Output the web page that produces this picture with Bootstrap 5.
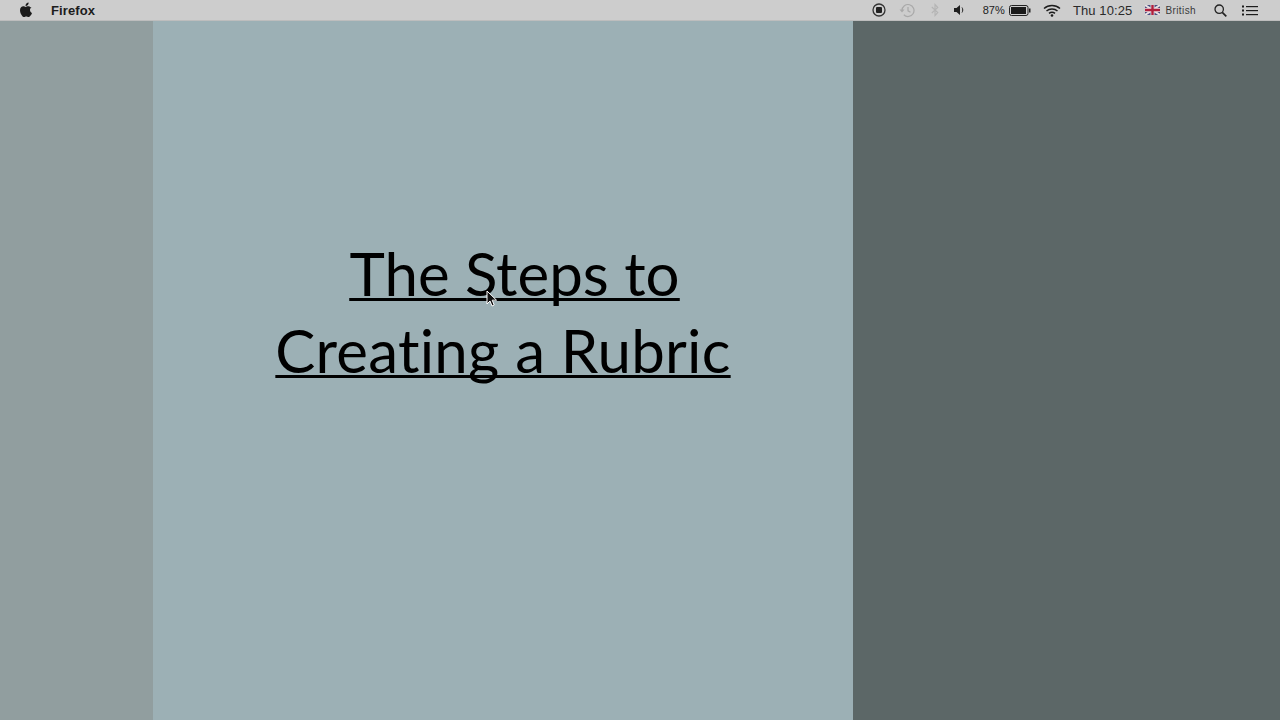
<!DOCTYPE html>
<html lang="en">
<head>
    <meta charset="UTF-8">
    <meta name="viewport" content="width=device-width, initial-scale=1.0">
    <title>The Steps to Creating a Rubric</title>
    <link href="https://cdn.jsdelivr.net/npm/bootstrap@5.3.0/dist/css/bootstrap.min.css" rel="stylesheet">
    <style>
        html, body { height: 100%; overflow: hidden; }
        body { font-family: "Liberation Sans", Arial, sans-serif; background: #9cb0b5; }
        .menubar { height: 21px; background: #cdcdcd; color: #1c1c1c; border-bottom: 1px solid #bdbdbd; padding: 0 22px 0 19px; }
        .menubar svg { display: block; flex: none; }
        .app-name { font-size: 13px; font-weight: 700; margin-left: 18px; padding-top: 1px; letter-spacing: .1px; }
        .battery-pct { font-size: 11px; margin-left: 18px; letter-spacing: .1px; }
        .clock { font-size: 13px; margin-left: 12px; color: #2a2a2a; letter-spacing: .1px; padding-top: 1px; }
        .lang { font-size: 10px; margin-left: 5px; color: #3a3a3a; letter-spacing: .4px; }
        .ml-4px { margin-left: 4px; }
        .ml-12 { margin-left: 12px; }
        .ml-13 { margin-left: 13px; }
        .ml-15 { margin-left: 15px; }
        .ml-16 { margin-left: 16px; }
        .ml-18 { margin-left: 18px; }
        .stage { height: 699px; }
        .side-left { width: 153px; background: #919e9f; }
        .slide { width: 700px; background: #9cb0b5; padding-top: 214px; }
        .side-right { background: #5c6767; }
        .slide-title { font-family: Lato, "Liberation Sans", sans-serif; font-weight: 400; font-size: 60px; line-height: 77px; color: #000; text-align: center; margin: 0; font-variant-ligatures: none; }
        .slide-title span { text-decoration: underline; text-decoration-thickness: 3px; text-underline-offset: 2px; text-decoration-skip-ink: none; }
        .line-one { display: block; padding-left: 23px; }
        .slide-title .line-two { letter-spacing: .25px; }
        .cursor { position: absolute; left: 486px; top: 290px; }
    </style>
</head>
<body class="position-relative">
    <!-- menu bar -->
    <div class="menubar d-flex align-items-center justify-content-between">
        <div class="d-flex align-items-center">
            <svg width="14" height="16" viewBox="0 0 14 16"><path fill="#1c1c1c" d="M9.6 0.5c.1 1-.3 1.9-.8 2.5-.6.7-1.4 1.1-2.2 1-.1-.9.3-1.8.8-2.4C8 1 8.900.6 9.600.5zM12.600 5.300c-1 .6-1.600 1.500-1.600 2.700 0 1.400.8 2.400 2 2.900-.3 1-.8 1.900-1.400 2.700-.6.8-1.200 1.500-2.100 1.500-.9 0-1.200-.5-2.200-.5s-1.400.5-2.200.5c-.9 0-1.500-.8-2.200-1.700C1.700 11.900 1 10 1 8.300c0-2.600 1.700-4 3.300-4 .9 0 1.700.6 2.300.6.500 0 1.400-.7 2.500-.7 1 0 2 .4 2.500 1.100z"/></svg>
            <div class="app-name">Firefox</div>
        </div>
        <div class="d-flex align-items-center">
            <svg width="14" height="14" viewBox="0 0 14 14"><circle cx="7" cy="7" r="6" fill="none" stroke="#333" stroke-width="1.300"/><rect x="4" y="4" width="6" height="6" rx="1" fill="#222"/></svg>
            <svg class="ml-13" width="16" height="15" viewBox="0 0 16 15"><g fill="none" stroke="#a9a9a9" stroke-width="1.200"><path d="M3 7.500a6 6 0 1 1 1.800 4.300"/><path d="M9 4v3.800l2.500 1.500"/></g><path fill="#a9a9a9" d="M0.500 6.500h5L3 9.500z"/></svg>
            <svg class="ml-16" width="8" height="14" viewBox="0 0 8 14"><path fill="none" stroke="#b4b4b4" stroke-width="1.100" d="M.8 4l6 5.500L4 12.500v-11l2.800 3L.8 10"/></svg>
            <svg class="ml-15" width="11" height="12" viewBox="0 0 11 12"><path fill="#1f1f1f" d="M0 4h2.500L6 1v10L2.500 8H0z"/><path fill="none" stroke="#1f1f1f" d="M8 3.500c1 1.400 1 3.600 0 5"/></svg>
            <div class="battery-pct">87%</div>
            <svg class="ml-4px" width="22" height="11" viewBox="0 0 22 11"><rect x=".5" y=".5" width="18.500" height="10" rx="2" fill="none" stroke="#222"/><rect x="2" y="2" width="15" height="7" fill="#1a1a1a"/><rect x="20" y="3.500" width="1.500" height="4" fill="#222"/></svg>
            <svg class="ml-12" width="18" height="13" viewBox="0 0 18 13"><g fill="none" stroke="#1c1c1c" stroke-width="1.500"><path d="M1 4.500c4.500-4 11.500-4 16 0"/><path d="M3.500 7c3-2.600 8-2.600 11 0"/><path d="M6 9.400c1.700-1.400 4.300-1.400 6 0"/></g><circle cx="9" cy="11.500" r="1.300" fill="#1c1c1c"/></svg>
            <div class="clock">Thu 10:25</div>
            <svg class="ml-13" width="15" height="10" viewBox="0 0 15 10"><rect width="15" height="10" fill="#4a4f80"/><path stroke="#e8dfe2" stroke-width="2" d="M0 0l15 10M15 0L0 10"/><path stroke="#e8dfe2" stroke-width="4" d="M7.500 0v10M0 5h15"/><path stroke="#b01f3c" stroke-width="2.400" d="M7.500 0v10M0 5h15"/></svg>
            <div class="lang">British</div>
            <svg class="ml-18" width="13" height="13" viewBox="0 0 13 13"><circle cx="5.200" cy="5.200" r="4.200" fill="none" stroke="#222" stroke-width="1.300"/><path stroke="#222" stroke-width="1.700" d="M8.300 8.300l4 4"/></svg>
            <svg class="ml-15" width="16" height="11" viewBox="0 0 16 11"><g fill="#1c1c1c"><rect y=".5" width="2" height="2"/><rect y="4.500" width="2" height="2"/><rect y="8.500" width="2" height="2"/><rect x="4" y="1" width="12" height="1.200"/><rect x="4" y="5" width="12" height="1.200"/><rect x="4" y="9" width="12" height="1.200"/></g></svg>
        </div>
    </div>

    <!-- slide area -->
    <div class="stage d-flex">
        <div class="side-left"></div>
        <div class="slide">
            <h1 class="slide-title"><span class="line-one"><span>The Steps to</span></span><span class="line-two">Creating a Rubric</span></h1>
        </div>
        <div class="side-right flex-grow-1"></div>
    </div>

    <!-- mouse pointer -->
    <svg class="cursor" width="12" height="18" viewBox="0 0 12 18"><path fill="#111" stroke="#fff" stroke-width="1" d="M1 1v13l3-3 2 5 2.200-1-2-4.800h4.300z"/></svg>

    <script src="https://cdn.jsdelivr.net/npm/bootstrap@5.3.0/dist/js/bootstrap.bundle.min.js"></script>
</body>
</html>
